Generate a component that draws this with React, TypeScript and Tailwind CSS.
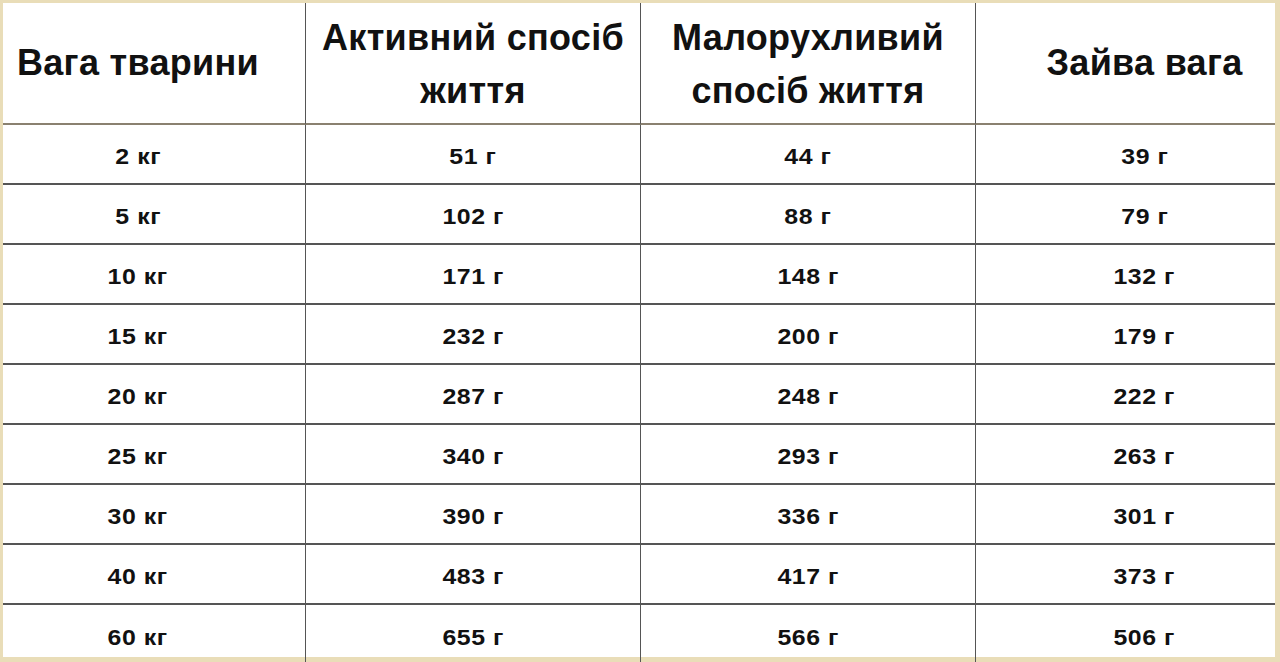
const rows: [string, string, string, string][] = [
  ['2 кг', '51 г', '44 г', '39 г'],
  ['5 кг', '102 г', '88 г', '79 г'],
  ['10 кг', '171 г', '148 г', '132 г'],
  ['15 кг', '232 г', '200 г', '179 г'],
  ['20 кг', '287 г', '248 г', '222 г'],
  ['25 кг', '340 г', '293 г', '263 г'],
  ['30 кг', '390 г', '336 г', '301 г'],
  ['40 кг', '483 г', '417 г', '373 г'],
  ['60 кг', '655 г', '566 г', '506 г'],
];

// horizontal offsets of the body text per column (matches the header)
const cellPad = ['pr-[32px]', '', '', 'pl-[38px]'];

export default function App() {
  return (
    <div
      className="w-[1280px] h-[662px] bg-[#e9ddb8] pt-[3px] pl-[3px] pr-[5px] pb-[5px] overflow-hidden"
      style={{ fontFamily: '"Liberation Sans", Arial, sans-serif' }}
    >
      <div className="w-full h-full bg-white grid grid-cols-[303px_335px_335px_1fr] grid-rows-[122px_repeat(9,60px)] text-[#111]">
        {/* Header */}
        <div className="border-r border-[#555] border-b-2 border-b-[#8a8170] flex items-center pl-[14px] text-[36px] font-bold tracking-[0.3px]">
          Вага тварини
        </div>
        <div className="border-r border-[#555] border-b-2 border-b-[#8a8170] flex items-center justify-center text-center text-[36px] leading-[53px] font-bold tracking-[0.3px] pt-[2px]">
          Активний спосіб<br />життя
        </div>
        <div className="border-r border-[#555] border-b-2 border-b-[#8a8170] flex items-center justify-center text-center text-[36px] leading-[53px] font-bold tracking-[0.3px] pt-[2px]">
          Малорухливий<br />спосіб життя
        </div>
        <div className="border-b-2 border-b-[#8a8170] flex items-center justify-center pl-[38px] text-[36px] font-bold tracking-[0.3px]">
          Зайва вага
        </div>

        {/* Body */}
        {rows.map((r, i) => {
          const last = i === rows.length - 1;
          return r.map((v, j) => (
            <div
              key={`${i}-${j}`}
              className={`flex items-center justify-center pt-[4px] ${cellPad[j]} ${
                j < 3 ? 'border-r border-[#555]' : ''
              } ${last ? '' : 'border-b-2 border-b-[#555]'}`}
            >
              <span className="inline-block text-[22px] font-bold tracking-[0.5px] scale-x-[1.13]">{v}</span>
            </div>
          ));
        })}
      </div>
    </div>
  );
}
